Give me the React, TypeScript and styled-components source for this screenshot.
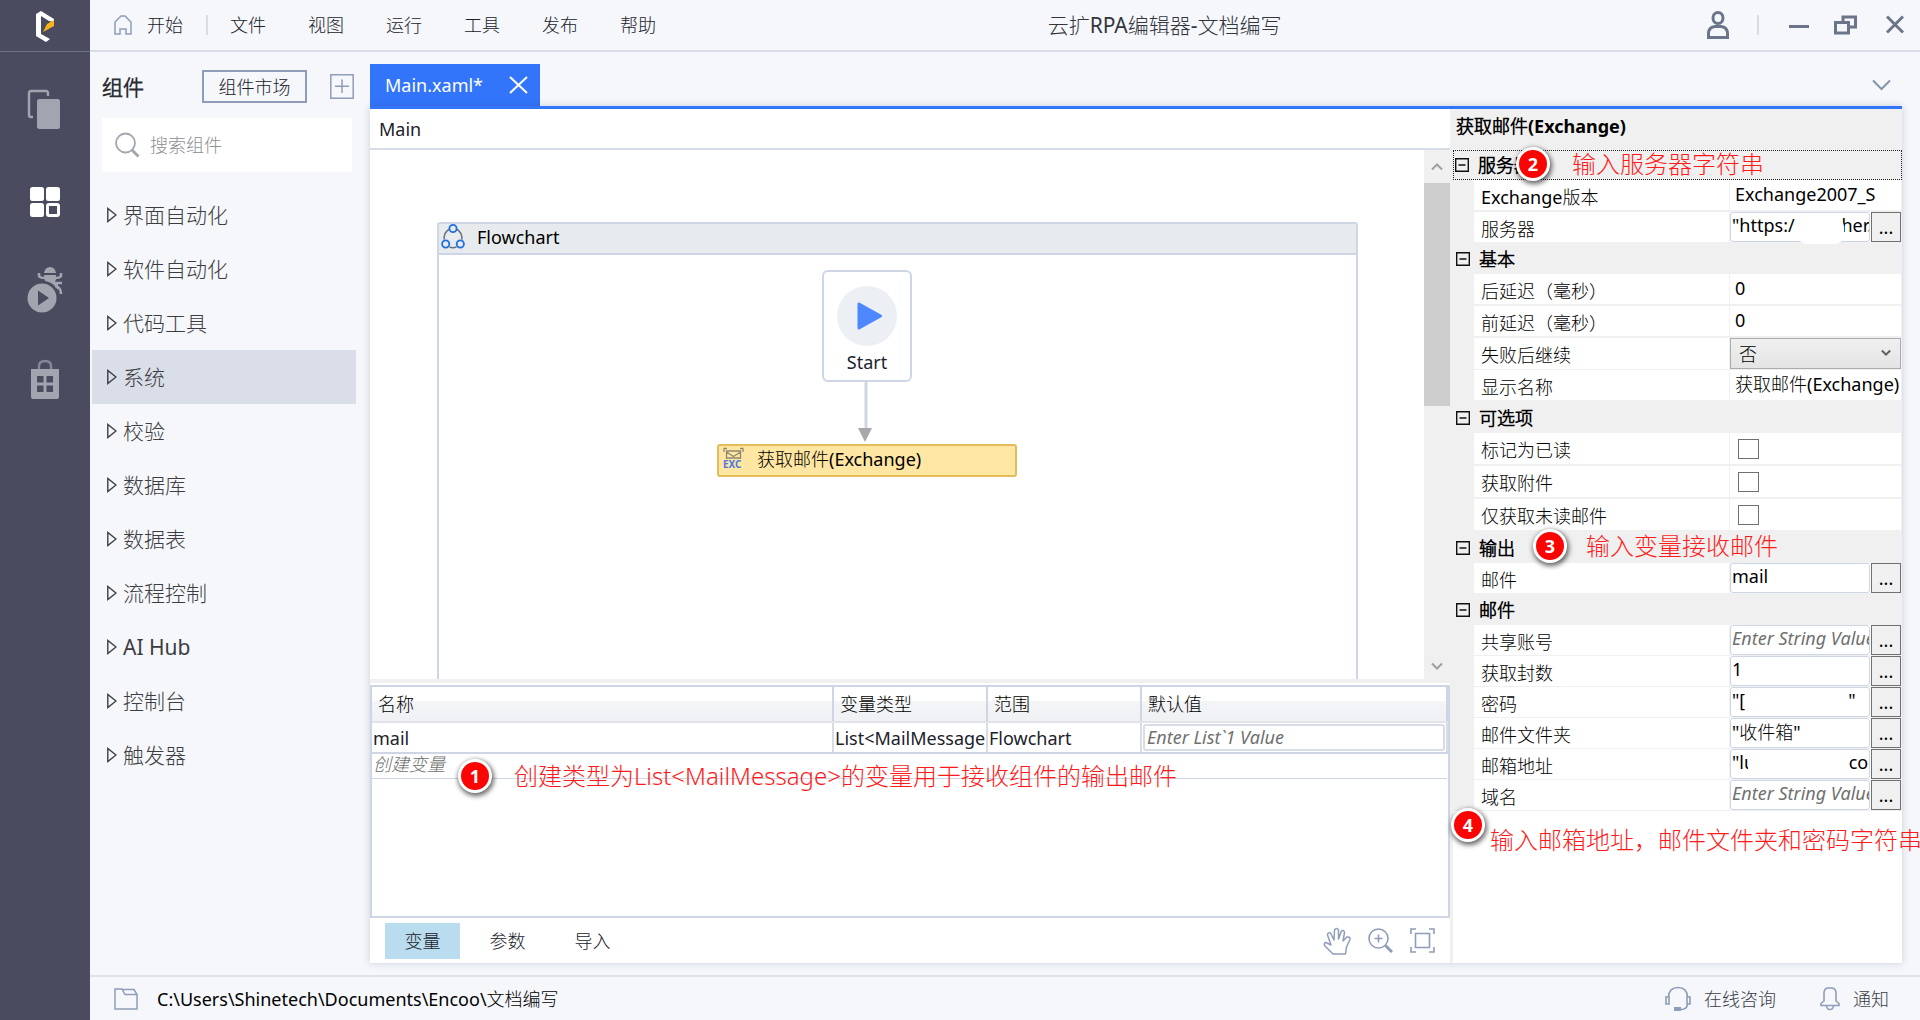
import React from "react";
import styled, { createGlobalStyle, css } from "styled-components";

const ink = "#20222b";
const line = "#d6dde6";
const steel = "#8f9db8";
const field = "#ced5e4";

const GlobalStyle = createGlobalStyle`
  *, *::before, *::after { box-sizing: border-box; }
  body {
    margin: 0;
    overflow: hidden;
    background: #f5f7fb;
    color: #000;
    font: 400 18px/24px "Noto Sans", "Noto Sans CJK SC Light", "Noto Sans CJK SC DemiLight", "Noto Sans CJK SC", sans-serif;
  }
  button, input, select { font: inherit; color: inherit; margin: 0; }
  button { background: none; border: 0; padding: 0; cursor: pointer; }
`;

const Shell = styled.div`
  display: flex;
  height: 100vh;
  overflow: hidden;
`;

/* ---------- left rail ---------- */
const Rail = styled.nav`
  flex: 0 0 90px;
  display: flex;
  flex-direction: column;
  background: #4a4b5e;
`;
const Brand = styled.div`
  height: 52px;
  display: flex;
  align-items: center;
  justify-content: center;
  border-bottom: 1px solid #6d7487;
`;
const RailButton = styled.button`
  height: 90px;
  display: flex;
  align-items: center;
  justify-content: center;
`;
const RailList = styled.div`
  display: flex;
  flex-direction: column;
  padding-top: 12px;
`;

/* ---------- frame ---------- */
const Frame = styled.div`
  flex: 1;
  min-width: 0;
  display: flex;
  flex-direction: column;
`;
const TopBar = styled.header`
  height: 52px;
  display: grid;
  grid-template-columns: 3fr auto 2fr;
  align-items: center;
  padding: 0 16px 0 24px;
  border-bottom: 2px solid ${line};
  color: ${ink};
`;
const Menu = styled.nav`
  display: flex;
  align-items: center;
`;
const MenuButton = styled.button`
  width: 78px;
  text-align: left;
`;
const HomeButton = styled.button`
  display: flex;
  align-items: center;
  gap: 15px;
`;
const Split = styled.span<{ $left: number; $right: number }>`
  width: 2px;
  height: 20px;
  margin: 0 ${(p) => p.$right}px 0 ${(p) => p.$left}px;
  background: #d9dce3;
`;
const AppTitle = styled.h1`
  margin: 0;
  font-size: 21px;
  font-weight: 400;
  color: #33353d;
`;
const WindowTools = styled.div`
  display: flex;
  align-items: center;
  justify-content: flex-end;
`;
const ToolButton = styled.button<{ $gap?: number }>`
  display: flex;
  margin-left: ${(p) => p.$gap ?? 0}px;
`;
const Body = styled.div`
  flex: 1;
  min-height: 0;
  display: flex;
`;

/* ---------- component tree ---------- */
const Side = styled.aside`
  flex: 0 0 280px;
  min-width: 0;
  display: flex;
  flex-direction: column;
  padding: 18px 14px 0 2px;
`;
const SideHead = styled.div`
  display: flex;
  align-items: center;
  padding: 0 2px 0 10px;
`;
const SideTitle = styled.h2`
  flex: 1;
  margin: 0;
  font-size: 21px;
  color: #2d2e33;
`;
const MarketButton = styled.button`
  height: 33px;
  width: 105px;
  margin-right: 23px;
  border: 2px solid ${steel};
  color: ${ink};
`;
const AddButton = styled.button`
  display: flex;
`;
const Search = styled.label`
  display: flex;
  align-items: center;
  gap: 10px;
  height: 54px;
  margin: 15px 4px 0 10px;
  padding: 0 12px;
  background: #fff;
`;
const SearchInput = styled.input`
  flex: 1;
  width: 100%;
  min-width: 0;
  border: 0;
  padding: 0;
  outline: 0;
  background: none;
  &::placeholder { color: #8e8e93; opacity: 1; }
`;
const Tree = styled.ul`
  list-style: none;
  margin: 16px 0 0;
  padding: 0;
`;
const TreeButton = styled.button<{ $active?: boolean }>`
  width: 100%;
  height: 54px;
  display: flex;
  align-items: center;
  gap: 6px;
  padding-left: 15px;
  font-size: 21px;
  color: #3c3d42;
  background: ${(p) => (p.$active ? "#dadee8" : "none")};
`;

/* ---------- workspace ---------- */
const Work = styled.main`
  flex: 1;
  min-width: 0;
  display: flex;
  flex-direction: column;
  padding: 12px 18px 12px 0;
`;
const TabStrip = styled.div`
  display: flex;
  align-items: center;
  height: 42px;
  padding-right: 11px;
`;
const FileTab = styled.div`
  align-self: stretch;
  display: flex;
  align-items: center;
  gap: 26px;
  padding: 0 12px 0 15px;
  color: #fff;
  background: #3274fa;
`;
const Spacer = styled.span`
  flex: 1;
`;
const Panels = styled.div`
  flex: 1;
  min-height: 0;
  display: flex;
  border-top: 3px solid #3274fa;
  box-shadow: 0 0 8px rgba(60, 70, 100, 0.22);
`;
const Designer = styled.section`
  flex: 1;
  min-width: 0;
  display: flex;
  flex-direction: column;
  background: #fff;
`;
const Crumb = styled.div`
  height: 41px;
  padding: 8px 9px;
  border-bottom: 2px solid ${line};
  color: ${ink};
`;
const Stage = styled.div`
  flex: 1;
  min-height: 0;
  display: flex;
  border-bottom: 4px solid #f0f0f0;
`;
const Canvas = styled.div`
  flex: 1;
  min-width: 0;
  display: flex;
  padding: 72px 66px 0 67px;
`;
const Flow = styled.div`
  flex: 1;
  min-width: 0;
  position: relative;
  border: 2px solid ${field};
  border-bottom: 0;
  border-radius: 3px 3px 0 0;
`;
const FlowHead = styled.div`
  display: flex;
  align-items: center;
  gap: 12px;
  height: 31px;
  padding: 0 0 4px 2px;
  background: #e7ebee;
  border-bottom: 2px solid ${field};
`;
const StartNode = styled.div`
  position: absolute;
  left: 383px;
  top: 46px;
  width: 90px;
  height: 112px;
  display: flex;
  flex-direction: column;
  align-items: center;
  justify-content: space-between;
  padding: 14px 0 6px;
  border: 2px solid ${field};
  border-radius: 6px;
  background: #fff;
  color: ${ink};
`;
const Connector = styled.svg`
  position: absolute;
  left: 418px;
  top: 158px;
`;
const ActivityNode = styled.div`
  position: absolute;
  left: 278px;
  top: 220px;
  width: 300px;
  height: 33px;
  display: flex;
  align-items: center;
  gap: 11px;
  padding: 0 4px 4px;
  border: 2px solid #e3bd5c;
  border-radius: 3px;
  background: #ffe6a2;
`;
const ScrollBar = styled.div`
  flex: 0 0 26px;
  display: flex;
  flex-direction: column;
  background: #f0f0f0;
`;
const ScrollButton = styled.button<{ $h: number }>`
  height: ${(p) => p.$h}px;
  display: flex;
  align-items: center;
  justify-content: center;
`;
const Thumb = styled.div`
  height: 223px;
  background: #cdcdcd;
`;

/* ---------- variables ---------- */
const Vars = styled.div`
  position: relative;
  height: 233px;
  margin-top: 2px;
  border: 2px solid ${field};
`;
const VarTable = styled.table`
  width: 100%;
  table-layout: fixed;
  border-collapse: collapse;
`;
const Th = styled.th<{ $w?: number }>`
  ${(p) => p.$w && css`width: ${p.$w}px;`}
  height: 35px;
  padding: 0 6px;
  text-align: left;
  font-weight: 400;
  background: linear-gradient(#fff 40%, #f4f5f7 42%, #eff1f4);
  border-right: 2px solid ${field};
  border-bottom: 2px solid #e2e3e6;
`;
const Td = styled.td`
  height: 31px;
  padding: 0 1px;
  overflow: hidden;
  white-space: nowrap;
  color: ${ink};
  border-right: 2px solid ${line};
  border-bottom: 2px solid ${field};
`;
const NewVar = styled.td`
  height: 25px;
  padding: 0 0 3px 1px;
  line-height: 20px;
  font-style: italic;
  color: #6e6e6e;
  border-bottom: 1px solid ${field};
`;
const DefaultInput = styled.input`
  display: block;
  width: 100%;
  height: 27px;
  padding: 0 2px 2px;
  border: 2px solid ${line};
  border-radius: 3px;
  &::placeholder { color: #707070; font-style: italic; opacity: 1; }
`;
const Dock = styled.div`
  height: 45px;
  display: flex;
  align-items: center;
  gap: 17px;
  padding: 0 15px;
`;
const DockTabs = styled.div`
  flex: 1;
  display: flex;
  gap: 10px;
`;
const DockTab = styled.button<{ $active?: boolean }>`
  width: 75px;
  height: 36px;
  color: ${ink};
  background: ${(p) => (p.$active ? "#b9dcee" : "none")};
`;

/* ---------- property grid ---------- */
const Props = styled.aside`
  position: relative;
  flex: 0 0 452px;
  display: flex;
  flex-direction: column;
  padding-left: 3px;
  background: #f0f0f0;
`;
const PropsTitle = styled.h2`
  margin: 0;
  height: 41px;
  padding: 5px 3px;
  font-size: 18px;
  line-height: 24px;
  font-weight: 700;
`;
const Category = styled.div<{ $focus?: boolean }>`
  position: relative;
  display: flex;
  align-items: center;
  gap: 9px;
  height: ${(p) => (p.$focus ? 30 : 31)}px;
  padding-left: ${(p) => (p.$focus ? 1 : 3)}px;
  font-weight: 700;
  ${(p) => p.$focus && css`border: 1px dotted #222;`}
`;
const PropRow = styled.div<{ $h: number }>`
  display: grid;
  grid-template-columns: 255px 1fr;
  column-gap: 1px;
  height: ${(p) => p.$h}px;
  margin-left: 21px;
  padding-right: 1px;
  border-bottom: 2px solid #f0f0f0;
`;
const PropLabel = styled.label`
  padding: 5px 7px 0;
  background: #fff;
`;
const PropValue = styled.div`
  position: relative;
  display: flex;
  min-width: 0;
  background: #fff;
`;
const PlainInput = styled.input<{ $clip?: boolean }>`
  flex: 1;
  min-width: 0;
  margin-right: ${(p) => (p.$clip ? 26 : 0)}px;
  padding: 0 0 2px 5px;
  border: 0;
  background: none;
`;
const ExprInput = styled.input`
  flex: 1;
  min-width: 0;
  height: 30px;
  padding: 0 0 4px 1px;
  border: 1px solid ${field};
  border-radius: 3px;
  background: #fff;
  &::placeholder { color: #707070; font-style: italic; opacity: 1; }
`;
const MoreButton = styled.button`
  flex: 0 0 30px;
  height: 30px;
  margin-left: 1px;
  border: 1px solid #707070;
  background: #f0f0f0;
`;
const Choice = styled.select`
  flex: 1;
  height: 31px;
  appearance: none;
  padding: 0 8px;
  border: 1px solid #acacac;
  border-radius: 0;
  background: linear-gradient(#f0f0f0, #e4e4e4);
`;
const ChoiceMark = styled.svg`
  position: absolute;
  right: 10px;
  top: 11px;
  pointer-events: none;
`;
const Tick = styled.input`
  appearance: none;
  width: 21px;
  height: 20px;
  margin: 6px 0 0 8px;
  border: 1px solid #707070;
  background: #fff;
`;
const Veil = styled.span<{ $x: number; $w: number; $y: number }>`
  position: absolute;
  left: ${(p) => p.$x}px;
  top: ${(p) => p.$y}px;
  width: ${(p) => p.$w}px;
  height: 26px;
  border-radius: 9px;
  background: #fff;
`;
const Blank = styled.div`
  flex: 1;
  background: #fff;
`;

/* ---------- notes ---------- */
const Note = styled.div<{ $x: number; $y: number; $gap: number }>`
  position: absolute;
  z-index: 2;
  left: ${(p) => p.$x}px;
  top: ${(p) => p.$y}px;
  display: flex;
  align-items: center;
  gap: ${(p) => p.$gap}px;
  white-space: nowrap;
  font-size: 24px;
  line-height: 34px;
  font-weight: 300;
  color: #ff1a1a;
`;
const NoteText = styled.span<{ $drop?: number }>`
  padding-top: ${(p) => p.$drop ?? 0}px;
`;
const Badge = styled.span`
  width: 34px;
  height: 34px;
  border: 3px solid #fff;
  border-radius: 50%;
  background: #fb0404;
  color: #fff;
  text-align: center;
  font: 700 18px/28px "Noto Sans", sans-serif;
  box-shadow: 1px 2px 5px 1px rgba(0, 0, 0, 0.6);
`;

/* ---------- status bar ---------- */
const StatusBar = styled.footer`
  height: 45px;
  display: flex;
  align-items: center;
  padding: 0 31px 0 24px;
  border-top: 2px solid #dfe1e7;
`;
const StatusPath = styled.span`
  flex: 1;
  padding-left: 19px;
`;
const StatusLink = styled.a`
  display: flex;
  align-items: center;
  gap: 13px;
  margin-left: 44px;
  color: #3b3d48;
  text-decoration: none;
`;

const treeItems = ["界面自动化", "软件自动化", "代码工具", "系统", "校验", "数据库", "数据表", "流程控制", "AI Hub", "控制台", "触发器"];
const menuItems = ["文件", "视图", "运行", "工具", "发布", "帮助"];

type Row = {
  id: string;
  label: string;
  kind: "plain" | "expr" | "select" | "check";
  value?: string;
  hint?: string;
  clip?: boolean;
  veil?: [number, number, number];
};
type Group = { name: string; note?: [number, number, number, string, string]; rows: Row[] };

const groups: Group[] = [
  {
    name: "服务器",
    note: [62, -4, 22, "2", "输入服务器字符串"],
    rows: [
      { id: "version", label: "Exchange版本", kind: "plain", value: "Exchange2007_SP1", clip: true },
      { id: "server", label: "服务器", kind: "expr", value: "\"https:/          her.", veil: [68, 46, 6] },
    ],
  },
  {
    name: "基本",
    rows: [
      { id: "after", label: "后延迟（毫秒）", kind: "plain", value: "0" },
      { id: "before", label: "前延迟（毫秒）", kind: "plain", value: "0" },
      { id: "continue", label: "失败后继续", kind: "select", value: "否" },
      { id: "display", label: "显示名称", kind: "plain", value: "获取邮件(Exchange)" },
    ],
  },
  {
    name: "可选项",
    rows: [
      { id: "read", label: "标记为已读", kind: "check" },
      { id: "attach", label: "获取附件", kind: "check" },
      { id: "unread", label: "仅获取未读邮件", kind: "check" },
    ],
  },
  {
    name: "输出",
    note: [80, -3, 19, "3", "输入变量接收邮件"],
    rows: [{ id: "mail", label: "邮件", kind: "expr", value: "mail" }],
  },
  {
    name: "邮件",
    rows: [
      { id: "shared", label: "共享账号", kind: "expr", hint: "Enter String Value" },
      { id: "count", label: "获取封数", kind: "expr", value: "1" },
      { id: "password", label: "密码", kind: "expr", value: "\"[                      \"", veil: [14, 100, 2] },
      { id: "folder", label: "邮件文件夹", kind: "expr", value: "\"收件箱\"" },
      { id: "address", label: "邮箱地址", kind: "expr", value: "\"lu                    coo", veil: [18, 98, 2] },
      { id: "domain", label: "域名", kind: "expr", hint: "Enter String Value" },
    ],
  },
];
const rowHeight = { plain: 32, select: 32, expr: 31, check: 33 };

const Fold = () => (
  <svg width="14" height="14" viewBox="0 0 14 14" fill="none" stroke="#111" strokeWidth="1.4">
    <path d="M.7 .7H13.3V13.3H.7ZM3.500 7H10.500" />
  </svg>
);
const Chevron = ({ up }: { up?: boolean }) => (
  <svg width="12" height="9" viewBox="0 0 12 9" fill="none" stroke="#a0a0a0" strokeWidth="2">
    <path d={up ? "M1 7.500 6 2.500 11 7.500" : "M1 1.500 6 6.500 11 1.500"} />
  </svg>
);

function Annotation({ x, y, gap, n, text, drop }: { x: number; y: number; gap: number; n: string; text: string; drop?: number }) {
  return (
    <Note $x={x} $y={y} $gap={gap}>
      <Badge>{n}</Badge>
      <NoteText $drop={drop}>{text}</NoteText>
    </Note>
  );
}

function PropertyRow({ row }: { row: Row }) {
  return (
    <PropRow $h={rowHeight[row.kind]}>
      <PropLabel htmlFor={row.id}>{row.label}</PropLabel>
      <PropValue>
        {row.kind === "plain" && <PlainInput id={row.id} defaultValue={row.value} $clip={row.clip} />}
        {row.kind === "check" && <Tick id={row.id} type="checkbox" />}
        {row.kind === "select" && (
          <>
            <Choice id={row.id} defaultValue={row.value}>
              <option>{row.value}</option>
            </Choice>
            <ChoiceMark width="10" height="8" viewBox="0 0 12 9" fill="none" stroke="#606060" strokeWidth="2.400">
              <path d="M1 1.500 6 6.500 11 1.500" />
            </ChoiceMark>
          </>
        )}
        {row.kind === "expr" && (
          <>
            <ExprInput id={row.id} defaultValue={row.value} placeholder={row.hint} />
            <MoreButton>...</MoreButton>
            {row.veil && <Veil $x={row.veil[0]} $w={row.veil[1]} $y={row.veil[2]} />}
          </>
        )}
      </PropValue>
    </PropRow>
  );
}

export default function App() {
  return (
    <Shell>
      <GlobalStyle />
      <Rail>
        <Brand>
          <svg width="20" height="32" viewBox="0 0 20 32">
            <path d="M1 4 6 1 19 9V12L14 11 6 6V24L15 29 11 32 1 26Z" fill="#fff" />
            <path d="M19 10V16L8 22 12 14Z" fill="#fbb11c" />
          </svg>
        </Brand>
        <RailList>
          <RailButton aria-label="files">
            <svg width="36" height="42" viewBox="0 0 36 42">
              <path d="M21 8V5Q21 3 19 3H4Q2 3 2 5V27Q2 29 4 29H6" fill="none" stroke="#a2a5af" strokeWidth="2.400" />
              <rect x="10" y="11" width="23" height="30" rx="2.500" fill="#a2a5af" />
            </svg>
          </RailButton>
          <RailButton aria-label="components">
            <svg width="30" height="36" viewBox="0 -6 30 36" fill="#fff">
              <rect width="14" height="14" rx="2.500" />
              <rect x="16" width="14" height="14" rx="2.500" />
              <rect y="16" width="14" height="14" rx="2.500" />
              <rect x="17.500" y="17.500" width="11" height="11" rx="1.500" fill="none" stroke="#fff" strokeWidth="3" />
            </svg>
          </RailButton>
          <RailButton aria-label="debug">
            <svg width="36" height="48" viewBox="2 0 36 48">
              <circle cx="17" cy="33" r="14.500" fill="#a2a5af" />
              <path d="M13 25.500V40.500L24 33Z" fill="#4a4b5e" />
              <path d="M19 8Q20 2 25 2 30 2 31 8Z" fill="#a2a5af" />
              <path d="M19 10H31Q32 14 30 17L33 19V25Q28 17 20 16Z" fill="#a2a5af" />
              <path d="M14 8V11Q15 13 20 13M36 8V11Q35 13 30 13M30 18H37M30 21Q36 22 36 29" fill="none" stroke="#a2a5af" strokeWidth="2.600" />
            </svg>
          </RailButton>
          <RailButton aria-label="market">
            <svg width="30" height="42" viewBox="0 0 30 42">
              <path d="M9 12V8Q9 3 15 3 21 3 21 8V12" fill="none" stroke="#85889a" strokeWidth="2.400" />
              <path d="M1 11H29V39Q29 41 27 41H3Q1 41 1 39Z" fill="#a2a5af" />
              <path d="M7 18H13.500V24.500H7ZM16.500 18H23V24.500H16.500ZM7 27.500H13.500V34H7ZM16.500 27.500H23V34H16.500Z" fill="#4a4b5e" />
            </svg>
          </RailButton>
        </RailList>
      </Rail>

      <Frame>
        <TopBar>
          <Menu>
            <HomeButton>
              <svg width="18" height="20" viewBox="0 0 18 20" fill="none" stroke={steel} strokeWidth="1.500">
                <path d="M1 19V7L7 1H11L17 7V19H12V14H6V19Z" />
              </svg>
              开始
            </HomeButton>
            <Split $left={23} $right={22} />
            {menuItems.map((m) => (
              <MenuButton key={m}>{m}</MenuButton>
            ))}
          </Menu>
          <AppTitle>云扩RPA编辑器-文档编写</AppTitle>
          <WindowTools>
            <ToolButton aria-label="account">
              <svg width="22" height="28" viewBox="0 0 22 28" fill="none" stroke="#6b7488" strokeWidth="3">
                <ellipse cx="11" cy="7" rx="5" ry="5.500" />
                <path d="M1.500 26.500V22Q2 16 8 15.500H14Q20 16 20.500 22V26.500Z" />
              </svg>
            </ToolButton>
            <Split $left={28} $right={30} />
            <ToolButton aria-label="minimize">
              <svg width="20" height="20" viewBox="0 0 20 20" stroke="#6b7488" strokeWidth="3">
                <path d="M0 11.500H20" />
              </svg>
            </ToolButton>
            <ToolButton aria-label="restore" $gap={25}>
              <svg width="23" height="20" viewBox="0 0 23 20" fill="none" stroke="#6b7488" strokeWidth="3">
                <path d="M9 7V2H21.500V12H15M1.500 7.500H14.500V18H1.500Z" />
              </svg>
            </ToolButton>
            <ToolButton aria-label="close" $gap={29}>
              <svg width="18" height="20" viewBox="0 0 18 20" stroke="#6b7488" strokeWidth="3">
                <path d="M1 1.500 17 17.500M17 1.500 1 17.500" />
              </svg>
            </ToolButton>
          </WindowTools>
        </TopBar>

        <Body>
          <Side>
            <SideHead>
              <SideTitle>组件</SideTitle>
              <MarketButton>组件市场</MarketButton>
              <AddButton aria-label="add">
                <svg width="24" height="25" viewBox="0 0 24 25" fill="none" stroke={steel} strokeWidth="1.500">
                  <path d="M.8 .8H23.200V24.200H.8ZM12 5.500V19M5 12.200H19" />
                </svg>
              </AddButton>
            </SideHead>
            <Search>
              <svg width="26" height="26" viewBox="0 0 26 26" fill="none" stroke="#a3a8b0">
                <circle cx="11.500" cy="11" r="9.500" strokeWidth="1.800" />
                <path d="M18 18 24.500 24.500" strokeWidth="3" />
              </svg>
              <SearchInput aria-label="search" placeholder="搜索组件" />
            </Search>
            <Tree>
              {treeItems.map((t) => (
                <li key={t}>
                  <TreeButton $active={t === "系统"}>
                    <svg width="10" height="16" viewBox="0 0 10 16" fill="none" stroke="#3c3d42" strokeWidth="1.400">
                      <path d="M.8 1.500V14.500L9 8Z" />
                    </svg>
                    {t}
                  </TreeButton>
                </li>
              ))}
            </Tree>
          </Side>

          <Work>
            <TabStrip>
              <FileTab>
                Main.xaml*
                <ToolButton aria-label="close tab">
                  <svg width="19" height="18" viewBox="0 0 19 18" stroke="#fff" strokeWidth="2">
                    <path d="M1 1 18 17M18 1 1 17" />
                  </svg>
                </ToolButton>
              </FileTab>
              <Spacer />
              <ToolButton aria-label="tab list">
                <svg width="19" height="12" viewBox="0 0 19 12" fill="none" stroke="#8593ad" strokeWidth="2">
                  <path d="M1 1.500 9.500 10 18 1.500" />
                </svg>
              </ToolButton>
            </TabStrip>

            <Panels>
              <Designer>
                <Crumb>Main</Crumb>
                <Stage>
                  <Canvas>
                    <Flow>
                      <FlowHead>
                        <svg width="24" height="25" viewBox="0 0 24 25" fill="none" strokeWidth="1.800">
                          <path d="M8.500 5Q3 8 3 15.500M15.500 5Q21 8 21 15.500M8.500 23Q12 24.500 15.500 23" stroke="#6b7280" strokeWidth="1.500" />
                          <circle cx="12" cy="4.500" r="3.600" stroke="#1e70dc" />
                          <circle cx="4.700" cy="20" r="3.600" stroke="#1e70dc" />
                          <circle cx="19.300" cy="20" r="3.600" stroke="#1e70dc" />
                        </svg>
                        Flowchart
                      </FlowHead>
                      <StartNode>
                        <svg width="60" height="60" viewBox="0 0 60 60">
                          <circle cx="30" cy="30" r="30" fill="#eceff4" />
                          <path d="M22 18V42L43.500 30Z" fill="#4d88ff" stroke="#4d88ff" strokeWidth="3" strokeLinejoin="round" />
                        </svg>
                        Start
                      </StartNode>
                      <Connector width="16" height="60" viewBox="0 0 16 60">
                        <path d="M9 0V47" stroke={field} strokeWidth="3" />
                        <path d="M1 46H15L8 60Z" fill="#a8a8a8" />
                      </Connector>
                      <ActivityNode>
                        <svg width="23" height="24" viewBox="0 0 23 24" fill="none" stroke="#8f8a70" strokeWidth="1.300">
                          <path d="M1 5V1.500H4M17 1.500H20V5M3.500 12V4H17.500V12M3.500 5 10.500 9.500 17.500 5M3 11H18" />
                          <text x="0" y="21" fill="#4a7be0" stroke="none" fontSize="10" fontWeight="700">EXC</text>
                        </svg>
                        获取邮件(Exchange)
                      </ActivityNode>
                    </Flow>
                  </Canvas>
                  <ScrollBar>
                    <ScrollButton $h={33} aria-label="scroll up"><Chevron up /></ScrollButton>
                    <Thumb />
                    <Spacer />
                    <ScrollButton $h={26} aria-label="scroll down"><Chevron /></ScrollButton>
                  </ScrollBar>
                </Stage>

                <Vars>
                  <VarTable>
                    <thead>
                      <tr>
                        <Th>名称</Th>
                        <Th $w={154}>变量类型</Th>
                        <Th $w={154}>范围</Th>
                        <Th $w={306}>默认值</Th>
                      </tr>
                    </thead>
                    <tbody>
                      <tr>
                        <Td>mail</Td>
                        <Td>{"List<MailMessage>"}</Td>
                        <Td>Flowchart</Td>
                        <Td><DefaultInput aria-label="默认值" placeholder="Enter List`1 Value" /></Td>
                      </tr>
                      <tr>
                        <NewVar colSpan={4}>创建变量</NewVar>
                      </tr>
                    </tbody>
                  </VarTable>
                  <Annotation x={86} y={72} gap={22} n="1" text="创建类型为List<MailMessage>的变量用于接收组件的输出邮件" />
                </Vars>

                <Dock>
                  <DockTabs>
                    <DockTab $active>变量</DockTab>
                    <DockTab>参数</DockTab>
                    <DockTab>导入</DockTab>
                  </DockTabs>
                  <ToolButton aria-label="pan">
                    <svg width="28" height="28" viewBox="0 0 28 28" fill="none" stroke={steel} strokeWidth="1.500" strokeLinejoin="round">
                      <path d="M10 27 2 19Q0 16 3 15.500L8 18 4.500 8Q4.500 5 7.500 6L11 13 11.500 3Q13.500 0 15.500 3V12L18.500 4Q21 2.500 21.500 5.500L20 14 24 10Q27.500 9.500 27 12.500L23.500 20 22.500 27Z" />
                    </svg>
                  </ToolButton>
                  <ToolButton aria-label="zoom">
                    <svg width="25" height="25" viewBox="0 0 25 25" fill="none" stroke={steel} strokeWidth="1.600">
                      <circle cx="10.500" cy="10.500" r="9.500" />
                      <path d="M10.500 6.500V14.500M6.500 10.500H14.500" />
                      <path d="M17.500 17.500 24 24" strokeWidth="3" />
                    </svg>
                  </ToolButton>
                  <ToolButton aria-label="fit">
                    <svg width="25" height="25" viewBox="0 0 25 25" fill="none" stroke={steel} strokeWidth="1.600">
                      <path d="M1 6V1H6M19 1H24V6M24 19V24H19M6 24H1V19M5.500 5.500H19.500V19.500H5.500Z" />
                    </svg>
                  </ToolButton>
                </Dock>
              </Designer>

              <Props>
                <PropsTitle>获取邮件(Exchange)</PropsTitle>
                {groups.map((g, i) => (
                  <React.Fragment key={g.name}>
                    <Category $focus={i === 0}>
                      <Fold />
                      {g.name}
                      {g.note && <Annotation x={g.note[0]} y={g.note[1]} gap={g.note[2]} n={g.note[3]} text={g.note[4]} />}
                    </Category>
                    {g.rows.map((r) => (
                      <PropertyRow key={r.id} row={r} />
                    ))}
                  </React.Fragment>
                ))}
                <Blank />
                <Annotation x={1} y={684} gap={5} n="4" text="输入邮箱地址，邮件文件夹和密码字符串" drop={30} />
              </Props>
            </Panels>
          </Work>
        </Body>

        <StatusBar>
          <svg width="24" height="22" viewBox="0 0 24 22" fill="none" stroke={steel} strokeWidth="1.500">
            <path d="M1 21V1H8L11 6.500H23V21ZM8 1.500H20L23 6.500" />
          </svg>
          <StatusPath>C:\Users\Shinetech\Documents\Encoo\文档编写</StatusPath>
          <StatusLink href="#chat">
            <svg width="26" height="26" viewBox="0 0 26 26" fill="none" stroke={steel} strokeWidth="1.600">
              <path d="M3.500 11Q4 1.500 13 1.500 22 1.500 22.500 11M1 11H4V18H1ZM22 11H25V18H22ZM22.500 18Q22 23.500 16 23.500" />
              <rect x="9" y="21" width="7" height="4" fill={steel} stroke="none" />
            </svg>
            在线咨询
          </StatusLink>
          <StatusLink href="#notice">
            <svg width="20" height="24" viewBox="0 0 20 24" fill="none" stroke={steel} strokeWidth="1.600">
              <path d="M1 18.500V16.500L4 14V6Q4 1.500 8 1H12Q16 1.500 16 6V14L19 16.500V18.500ZM6.500 19Q7 22.500 10 22.500 13 22.500 13.500 19" />
            </svg>
            通知
          </StatusLink>
        </StatusBar>
      </Frame>
    </Shell>
  );
}
